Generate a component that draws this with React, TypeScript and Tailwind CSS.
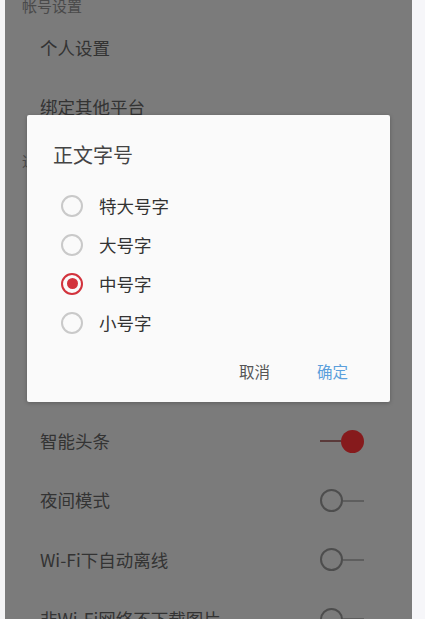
import React, { useState } from 'react'

const font = { fontFamily: '"Noto Sans CJK SC", "Noto Sans", sans-serif' }

type Row = { label: string; toggle?: 'on' | 'off' }

const topRows: Row[] = [{ label: '个人设置' }, { label: '绑定其他平台' }]

// rows below the dialog (the ones it covers are left as blank space)
const bottomRows: Row[] = [
  { label: '智能头条', toggle: 'on' },
  { label: '夜间模式', toggle: 'off' },
  { label: 'Wi-Fi下自动离线', toggle: 'off' },
  { label: '非Wi-Fi网络不下载图片', toggle: 'off' },
]

const sizes = ['特大号字', '大号字', '中号字', '小号字']

function Toggle({ on }: { on: boolean }) {
  if (on) {
    return (
      <div className="flex items-center w-[44px]">
        <div className="w-[21px] h-[2px] bg-[#5a3a3a]" />
        <div className="w-[23px] h-[23px] rounded-full bg-[#861a1c]" />
      </div>
    )
  }
  return (
    <div className="flex items-center w-[44px]">
      <div className="w-[23px] h-[23px] rounded-full border-2 border-[#4d4d4d]" />
      <div className="w-[21px] h-[2px] bg-[#5e5e5e]" />
    </div>
  )
}

function SettingRow({ row }: { row: Row }) {
  return (
    <div className="h-[59.3px] flex items-center justify-between pl-[35px] pr-[48px]">
      <span className="text-[17.5px] text-[#333333] whitespace-nowrap">{row.label}</span>
      {row.toggle && <Toggle on={row.toggle === 'on'} />}
    </div>
  )
}

function Radio({ checked }: { checked: boolean }) {
  if (checked) {
    return (
      <div className="w-[22px] h-[22px] rounded-full border-2 border-[#d2323c] flex items-center justify-center">
        <div className="w-[11px] h-[11px] rounded-full bg-[#d2323c]" />
      </div>
    )
  }
  return <div className="w-[22px] h-[22px] rounded-full border-2 border-[#c9c9c9]" />
}

export default function App() {
  const [size, setSize] = useState(2)

  return (
    <div className="w-[425px] h-[619px] flex overflow-hidden bg-[#f6f6f9]" style={font}>
      <div className="w-[5px] bg-[#f4f4f5]" />
      <div className="w-[407px] relative bg-[#7b7b7b] overflow-hidden">
        <div className="mt-[-4px] pl-[17px] h-[22px] text-[15px] leading-[20px] text-[#4a4a4a]">帐号设置</div>
        {topRows.map((r) => (
          <SettingRow key={r.label} row={r} />
        ))}
        <div className="pl-[17px] pt-[14px] h-[38px] text-[15px] leading-[20px] text-[#4a4a4a]">通用设置</div>
        <div className="h-[237px]" />
        {bottomRows.map((r) => (
          <SettingRow key={r.label} row={r} />
        ))}

        <div className="absolute left-[22px] top-[115px] w-[363px] h-[287px] bg-[#fafafa] rounded-[2px] shadow-[0_1px_4px_rgba(0,0,0,0.25)] flex flex-col">
          <div className="pl-[26px] pt-[26px] text-[20px] leading-[28px] text-[#444444]">正文字号</div>
          <div className="mt-[17px] flex flex-col">
            {sizes.map((s, i) => (
              <div
                key={s}
                className="h-[39px] flex items-center pl-[34px] cursor-pointer"
                onClick={() => setSize(i)}
              >
                <Radio checked={size === i} />
                <span className="ml-[16px] text-[17.5px] leading-[24px] text-[#333333]">{s}</span>
              </div>
            ))}
          </div>
          <div className="mt-[10px] h-[40px] flex items-center justify-end pr-[42px] gap-[47px] text-[15.5px]">
            <span className="text-[#555555]">取消</span>
            <span className="text-[#5b9fdc]">确定</span>
          </div>
        </div>
      </div>
      <div className="flex-1 bg-[#f6f6f9]" />
    </div>
  )
}
